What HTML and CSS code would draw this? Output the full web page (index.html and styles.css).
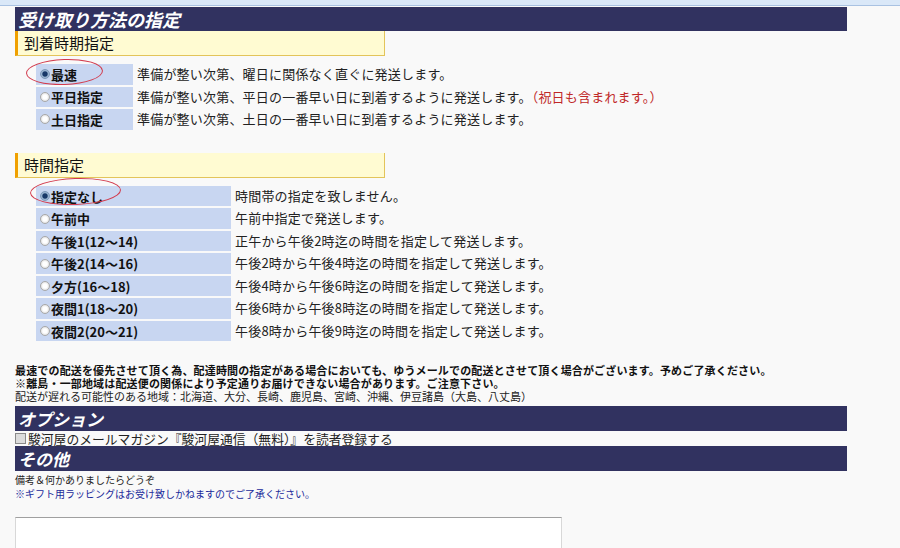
FILE: index.html
```html
<!DOCTYPE html>
<html lang="ja">
<head>
<meta charset="UTF-8">
<meta name="viewport" content="width=device-width, initial-scale=1.0">
<title>受け取り方法の指定</title>
<link rel="stylesheet" href="styles.css">
</head>
<body>
<div class="toolbar"></div>
<div class="page">
  <h2 class="bar">受け取り方法の指定</h2>

  <div class="sub">到着時期指定</div>
  <div class="choices date">
    <div class="pick"><span class="radio on"></span>最速<span class="mark mark-first"></span></div>
    <div class="desc">準備が整い次第、曜日に関係なく直ぐに発送します。</div>
    <div class="pick"><span class="radio"></span>平日指定</div>
    <div class="desc">準備が整い次第、平日の一番早い日に到着するように発送します。<span class="warn">（祝日も含まれます。）</span></div>
    <div class="pick"><span class="radio"></span>土日指定</div>
    <div class="desc">準備が整い次第、土日の一番早い日に到着するように発送します。</div>
  </div>

  <div class="sub sub-time">時間指定</div>
  <div class="choices time">
    <div class="pick"><span class="radio on"></span>指定なし<span class="mark mark-second"></span></div>
    <div class="desc">時間帯の指定を致しません。</div>
    <div class="pick"><span class="radio"></span>午前中</div>
    <div class="desc">午前中指定で発送します。</div>
    <div class="pick"><span class="radio"></span>午後1(12～14)</div>
    <div class="desc">正午から午後2時迄の時間を指定して発送します。</div>
    <div class="pick"><span class="radio"></span>午後2(14～16)</div>
    <div class="desc">午後2時から午後4時迄の時間を指定して発送します。</div>
    <div class="pick"><span class="radio"></span>夕方(16～18)</div>
    <div class="desc">午後4時から午後6時迄の時間を指定して発送します。</div>
    <div class="pick"><span class="radio"></span>夜間1(18～20)</div>
    <div class="desc">午後6時から午後8時迄の時間を指定して発送します。</div>
    <div class="pick"><span class="radio"></span>夜間2(20～21)</div>
    <div class="desc">午後8時から午後9時迄の時間を指定して発送します。</div>
  </div>

  <div class="notes">
    <p class="strong">最速での配送を優先させて頂く為、配達時間の指定がある場合においても、ゆうメールでの配送とさせて頂く場合がございます。予めご了承ください。</p>
    <p class="strong">※離島・一部地域は配送便の関係により予定通りお届けできない場合があります。ご注意下さい。</p>
    <p>配送が遅れる可能性のある地域：北海道、大分、長崎、鹿児島、宮崎、沖縄、伊豆諸島（大島、八丈島）</p>
  </div>

  <h2 class="bar bar-small">オプション</h2>
  <label class="mailmag"><span class="check"></span>駿河屋のメールマガジン『駿河屋通信（無料）』を読者登録する</label>

  <h2 class="bar bar-small">その他</h2>
  <p class="small">備考＆何かありましたらどうぞ</p>
  <p class="small gift">※ギフト用ラッピングはお受け致しかねますのでご了承ください。</p>
  <textarea class="memo"></textarea>
</div>
</body>
</html>
```

FILE: styles.css
```css
body {
    margin: 0;
    background-color: #f9f9f9;
    color: #222;
    font-family: "Noto Sans CJK JP", "Noto Sans", sans-serif;
}

.toolbar {
    height: 5px;
    background-color: #dae8f8;
    border-bottom: 1px solid #a9c2e2;
    margin-bottom: 1px;
}

.page {
    width: 832px;
    margin-left: 15px;
}

.bar {
    margin: 0;
    height: 24px;
    padding-left: 3px;
    background-color: #313260;
    color: #fff;
    font-size: 18px;
    font-style: italic;
    font-weight: bold;
    line-height: 24px;
}

.bar-small {
    height: 25px;
    line-height: 25px;
    font-size: 17px;
}

.sub {
    box-sizing: border-box;
    width: 370px;
    height: 25px;
    padding-left: 6px;
    background-color: #fffbd2;
    border-left: 3px solid #f0a000;
    border-right: 1px solid #e3c45a;
    border-bottom: 1px solid #e3c45a;
    font-size: 15px;
    line-height: 24px;
    color: #111;
}

.sub-time {
    margin-top: 23px;
}

.choices {
    display: grid;
    grid-template-columns: 97px auto;
    row-gap: 1.8px;
    margin: 8px 0 0 21px;
}

.choices.time {
    grid-template-columns: 195px auto;
}

.pick {
    position: relative;
    display: flex;
    align-items: center;
    height: 20.7px;
    padding-left: 4px;
    background-color: #c8d6f1;
    font-size: 13px;
    font-weight: bold;
    color: #111;
}

.desc {
    padding-left: 4px;
    font-size: 13px;
    letter-spacing: 0.2px;
    line-height: 20.7px;
    white-space: nowrap;
}

.warn {
    color: #c02828;
}

.radio {
    flex-shrink: 0;
    box-sizing: border-box;
    width: 10px;
    height: 10px;
    margin-right: 1px;
    border-radius: 50%;
    border: 1px solid #a8a8a8;
    background: radial-gradient(circle, #fff 0, #fff 2px, #e4e4e4 4px);
}

.radio.on {
    border-color: #7d98b8;
    background: radial-gradient(circle, #183868 0, #183868 2.2px, #9ab4d0 3.2px);
}

/* hand-drawn red circles over the chosen options */
.mark {
    position: absolute;
    border: 1px solid #d23a4c;
    border-radius: 50%;
    pointer-events: none;
}

.mark-first {
    left: -10px;
    top: -5px;
    width: 75px;
    height: 24px;
    transform: rotate(-2deg);
}

.mark-second {
    left: -6px;
    top: -8px;
    width: 89px;
    height: 25px;
    transform: rotate(-2deg);
}

.notes {
    margin: 23px 0 3px;
    font-size: 11px;
    line-height: 13px;
}

.notes p {
    margin: 0;
    white-space: nowrap;
}

.notes .strong {
    font-weight: bold;
    letter-spacing: 0.16px;
    color: #111;
}

.mailmag {
    display: flex;
    align-items: center;
    height: 15px;
    font-size: 12.8px;
    line-height: 15px;
}

.check {
    flex-shrink: 0;
    box-sizing: border-box;
    width: 11px;
    height: 11px;
    margin-right: 2px;
    border: 1px solid #8a8a8a;
    background-color: #dcdcdc;
}

.small {
    margin: 0;
    font-size: 10px;
    line-height: 14px;
}

.small:first-of-type {
    margin-top: 2px;
}

.gift {
    color: #1a2a9a;
}

.memo {
    display: block;
    box-sizing: border-box;
    width: 547px;
    height: 60px;
    margin-top: 16px;
    border: 1px solid #d8d8d8;
    border-top-color: #a0a0a0;
    background-color: #fff;
    resize: none;
}
```
